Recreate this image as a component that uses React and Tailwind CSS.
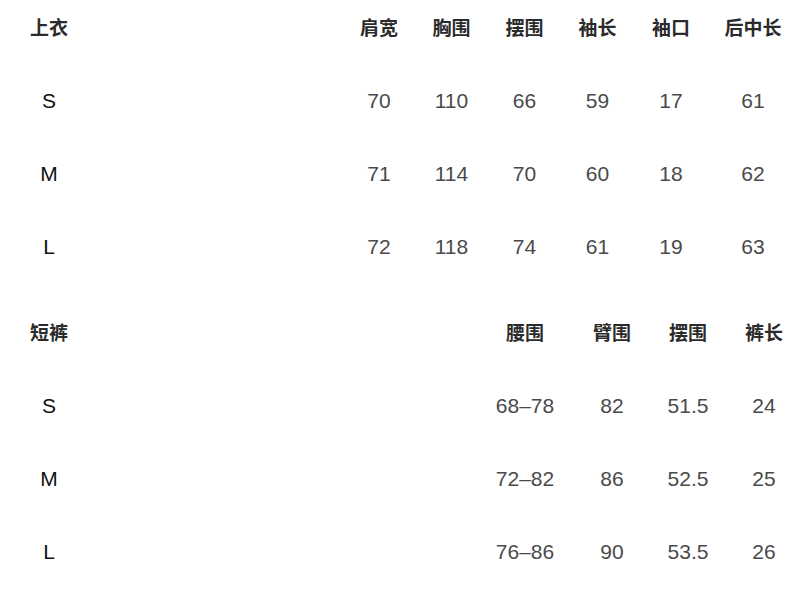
import React from 'react';

const cjk = { fontFamily: '"Noto Sans CJK SC", "Noto Sans", sans-serif' };

const tops = {
  title: '上衣',
  cols: ['肩宽', '胸围', '摆围', '袖长', '袖口', '后中长'],
  rows: [
    ['S', '70', '110', '66', '59', '17', '61'],
    ['M', '71', '114', '70', '60', '18', '62'],
    ['L', '72', '118', '74', '61', '19', '63'],
  ],
};

const shorts = {
  title: '短裤',
  cols: ['腰围', '臂围', '摆围', '裤长'],
  rows: [
    ['S', '68–78', '82', '51.5', '24'],
    ['M', '72–82', '86', '52.5', '25'],
    ['L', '76–86', '90', '53.5', '26'],
  ],
};

function SizeTable({ data, grid }) {
  return (
    <div>
      {/* 表头 */}
      <div className={`grid h-[54px] items-center ${grid}`}>
        <div className="pl-[30px] text-[19px] font-semibold text-[#2b2b2b]" style={cjk}>
          {data.title}
        </div>
        {data.cols.map((c) => (
          <div key={c} className="text-center text-[19px] font-semibold text-[#2b2b2b] whitespace-nowrap" style={cjk}>
            {c}
          </div>
        ))}
      </div>

      {/* 尺码行 */}
      <div className="pt-[10px]">
        {data.rows.map((r) => (
          <div key={r[0]} className={`grid h-[73px] items-center ${grid}`}>
            <div className="pl-[31px]">
              <span className="inline-block w-[36px] text-center text-[21px] text-[#111] font-['Liberation_Sans',sans-serif]">
                {r[0]}
              </span>
            </div>
            {r.slice(1).map((v, i) => (
              <div key={i} className="text-center text-[21px] text-[#4a4a4a] whitespace-nowrap font-['Liberation_Sans',sans-serif]">
                {v}
              </div>
            ))}
          </div>
        ))}
      </div>
    </div>
  );
}

export default function App() {
  return (
    <div className="w-[788px] h-[590px] overflow-hidden bg-white">
      <SizeTable data={tops} grid="grid-cols-[343px_72px_73px_73px_73px_74px_90px]" />
      <div className="mt-[22px]">
        <SizeTable data={shorts} grid="grid-cols-[480px_90px_84px_68px_84px]" />
      </div>
    </div>
  );
}
